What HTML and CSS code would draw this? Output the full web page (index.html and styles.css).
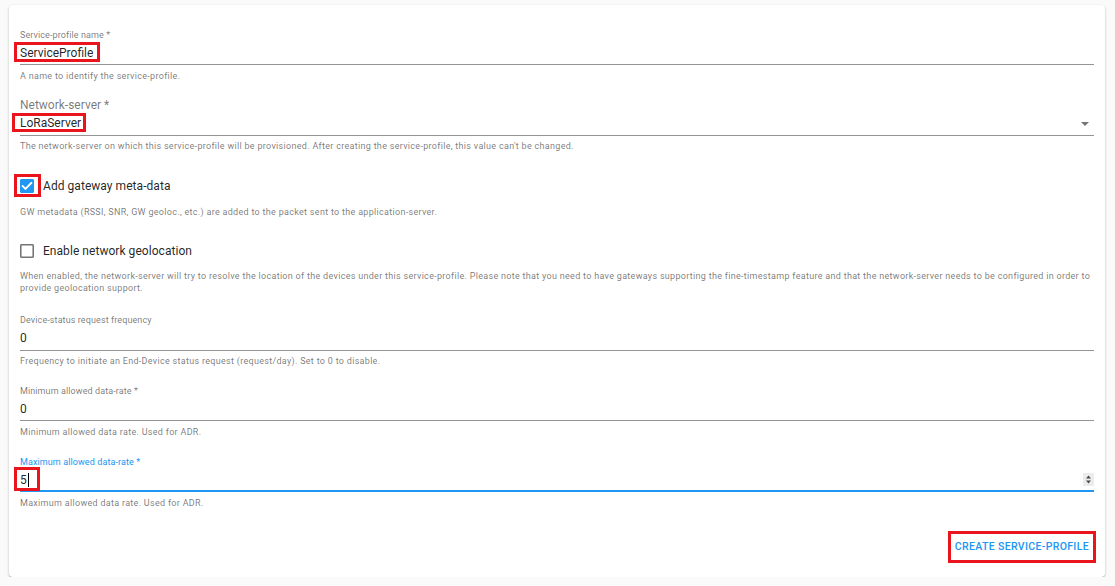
FILE: index.html
```html
<!DOCTYPE html>
<html lang="en">
<head>
<meta charset="utf-8">
<title>Create service-profile</title>
<link rel="stylesheet" href="styles.css">
</head>
<body>
<div class="page">
  <form class="card">
    <div class="field field-first">
      <div class="field-label">Service-profile name *</div>
      <div class="field-input"><span class="value mark mark-name">ServiceProfile</span></div>
      <div class="helper">A name to identify the service-profile.</div>
    </div>

    <div class="field">
      <div class="field-label large">Network-server *</div>
      <div class="field-input">
        <span class="value mark mark-ns">LoRaServer</span>
        <svg class="drop-arrow" width="8" height="4" viewBox="7 10 10 5"><path d="M7 10l5 5 5-5z" fill="#757575"/></svg>
      </div>
      <div class="helper">The network-server on which this service-profile will be provisioned. After creating the service-profile, this value can't be changed.</div>
    </div>

    <div class="check-block check-first">
      <div class="check-row">
        <span class="check-box mark mark-check">
          <svg width="14" height="14" viewBox="3 3 18 18"><path fill="#2196f3" d="M19 3H5c-1.11 0-2 .9-2 2v14c0 1.1.89 2 2 2h14c1.11 0 2-.9 2-2V5c0-1.1-.89-2-2-2zm-9 14l-5-5 1.41-1.41L10 14.17l7.59-7.59L19 8l-9 9z"/><path fill="#fff" d="M10 17l-5-5 1.41-1.41L10 14.170l7.59-7.59L19 8l-9 9z"/></svg>
        </span>
        <span class="check-label">Add gateway meta-data</span>
      </div>
      <div class="check-helper">GW metadata (RSSI, SNR, GW geoloc., etc.) are added to the packet sent to the application-server.</div>
    </div>

    <div class="check-block check-second">
      <div class="check-row">
        <span class="check-box">
          <svg width="14" height="14" viewBox="3 3 18 18"><path fill="#757575" d="M19 5v14H5V5h14m0-2H5c-1.1 0-2 .9-2 2v14c0 1.1.9 2 2 2h14c1.1 0 2-.9 2-2V5c0-1.1-.9-2-2-2z"/></svg>
        </span>
        <span class="check-label">Enable network geolocation</span>
      </div>
      <div class="check-helper">When enabled, the network-server will try to resolve the location of the devices under this service-profile. Please note that you need to have gateways supporting the fine-timestamp feature and that the network-server needs to be configured in order to provide geolocation support.</div>
    </div>

    <div class="field field-device">
      <div class="field-label">Device-status request frequency</div>
      <div class="field-input"><span class="value">0</span></div>
      <div class="helper">Frequency to initiate an End-Device status request (request/day). Set to 0 to disable.</div>
    </div>

    <div class="field field-rate">
      <div class="field-label">Minimum allowed data-rate *</div>
      <div class="field-input"><span class="value">0</span></div>
      <div class="helper">Minimum allowed data rate. Used for ADR.</div>
    </div>

    <div class="field field-rate">
      <div class="field-label focused">Maximum allowed data-rate *</div>
      <div class="field-input focused">
        <span class="value mark mark-five">5<span class="caret"></span></span>
        <svg class="spinner" width="11" height="13" viewBox="0 0 11 13"><rect width="11" height="13" fill="#ececec"/><path d="M3 5.5h5L5.5 2.5z" fill="#4a4a4a"/><path d="M3 7.5h5L5.5 10.5z" fill="#4a4a4a"/></svg>
      </div>
      <div class="helper">Maximum allowed data rate. Used for ADR.</div>
    </div>

    <div class="actions">
      <button type="button" class="btn">CREATE SERVICE-PROFILE</button>
    </div>
  </form>
</div>
</body>
</html>
```
FILE: styles.css
```css
html, body {
  margin: 0;
  padding: 0;
}
body {
  background: #fafafa;
  font-family: Roboto, "Liberation Sans", Arial, sans-serif;
  color: rgba(0, 0, 0, 0.87);
}
.page {
  padding: 5px 10px 0 9px;
}
.card {
  display: block;
  box-sizing: border-box;
  height: 572px;
  margin: 0;
  padding: 6px 11px 0 11px;
  background: #fff;
  border-radius: 4px;
  box-shadow: 0 1px 3px rgba(0, 0, 0, 0.2), 0 1px 1px rgba(0, 0, 0, 0.14), 0 2px 1px -1px rgba(0, 0, 0, 0.12);
}
.field {
  margin-top: 18.7px;
}
.field-first {
  margin-top: 18.5px;
}
.field-device {
  margin-top: 20.3px;
}
.field-label {
  height: 11px;
  font-size: 9px;
  line-height: 11px;
  letter-spacing: 0.1px;
  color: rgba(0, 0, 0, 0.54);
  white-space: nowrap;
}
.field-label.large {
  font-size: 12px;
  letter-spacing: 0;
}
.field-label.focused {
  color: #2196f3;
}
.field-input {
  display: flex;
  align-items: center;
  justify-content: space-between;
  height: 14px;
  padding: 5px 0 4.5px;
  font-size: 12px;
  line-height: 14px;
  border-bottom: 1px solid rgba(0, 0, 0, 0.42);
  color: rgba(0, 0, 0, 0.87);
}
.field-input.focused {
  border-bottom: 2px solid #2196f3;
  padding-bottom: 3.5px;
}
.value {
  display: inline-block;
  white-space: nowrap;
}
.caret {
  display: inline-block;
  width: 1px;
  height: 14px;
  margin-left: 1.5px;
  vertical-align: top;
  background: #000;
}
.drop-arrow {
  display: block;
  margin: 2px 5px 0 0;
}
.spinner {
  display: block;
}
.helper {
  margin-top: 5.5px;
  font-size: 9px;
  line-height: 11px;
  height: 11px;
  letter-spacing: 0.3px;
  color: rgba(0, 0, 0, 0.54);
  white-space: nowrap;
}
.check-block {
  margin-top: 14.8px;
}
.check-first {
  margin-top: 16.3px;
}
.check-row {
  display: flex;
  align-items: center;
  height: 36px;
}
.check-box {
  display: block;
  width: 14px;
  height: 14px;
  margin-right: 9px;
}
.check-box svg {
  display: block;
}
.check-label {
  font-size: 12px;
  line-height: 14px;
  letter-spacing: 0.05px;
  color: rgba(0, 0, 0, 0.87);
}
.check-helper {
  margin-top: 1.1px;
  font-size: 9px;
  line-height: 12.5px;
  letter-spacing: 0.3px;
  color: rgba(0, 0, 0, 0.54);
}
.actions {
  display: flex;
  justify-content: flex-end;
  margin-top: 24.9px;
  padding-right: 1px;
}
.btn {
  display: block;
  margin: 0;
  padding: 6px 4px;
  border: 0;
  background: transparent;
  font-family: Roboto, "Liberation Sans", Arial, sans-serif;
  font-size: 10.5px;
  font-weight: 500;
  line-height: 14px;
  letter-spacing: 0.35px;
  color: #2196f3;
  outline: 3px solid #ea141c;
  outline-offset: 0;
  cursor: pointer;
}

/* red annotation boxes drawn over content */
.mark {
  position: relative;
}
.mark::after {
  content: "";
  position: absolute;
  box-sizing: border-box;
  border: 3px solid #ea141c;
  pointer-events: none;
}
.mark-name::after {
  top: -3.3px;
  bottom: -2px;
  left: -6px;
  right: -6.3px;
}
.mark-ns::after {
  top: -3.3px;
  bottom: -1.7px;
  left: -7.7px;
  right: -5px;
}
.mark-check::after {
  top: -5.3px;
  bottom: -4px;
  left: -6px;
  right: -6.7px;
}
.mark-five::after {
  top: -5.2px;
  bottom: -4.2px;
  left: -6px;
  right: -10.7px;
}
```
